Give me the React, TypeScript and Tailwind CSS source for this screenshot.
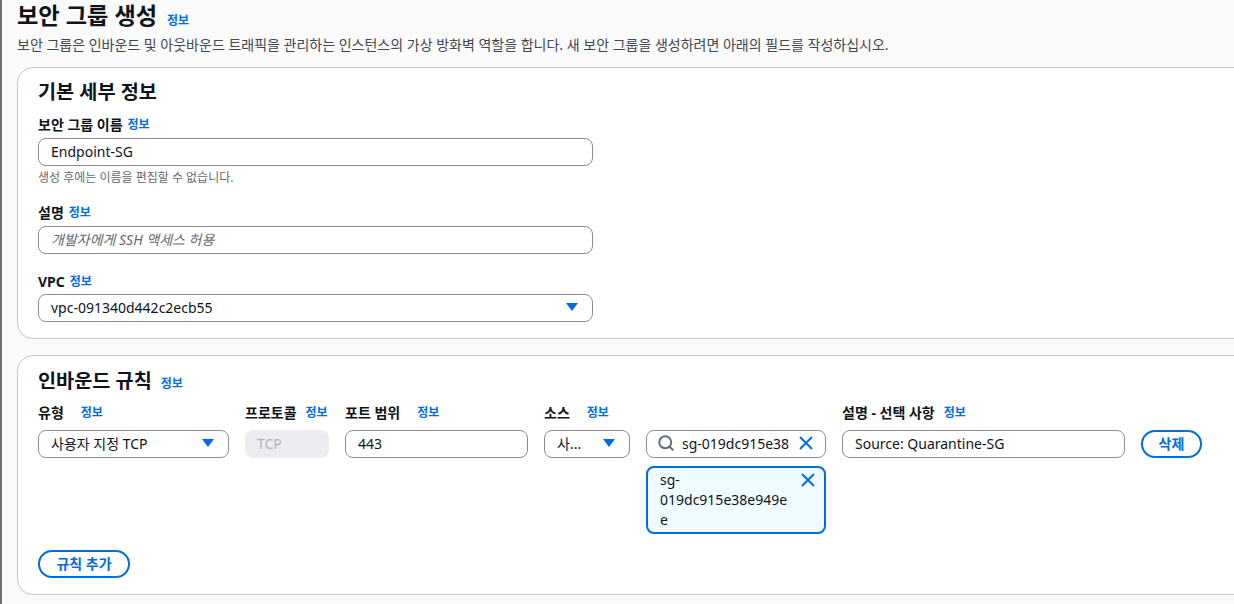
import { ReactNode } from 'react';
import { Search } from 'lucide-react';

const font = 'font-["Noto_Sans","Noto_Sans_CJK_KR",sans-serif]';

function Info({ className = '' }: { className?: string }) {
  return <span className={`text-[12px] font-bold text-[#006ce0] ${className}`}>정보</span>;
}

function Caret() {
  return (
    <svg width="12" height="8" viewBox="0 0 12 8" className="shrink-0">
      <path d="M0 0h12L6 8z" fill="#006ce0" />
    </svg>
  );
}

function Cross() {
  return (
    <svg width="14" height="14" viewBox="0 0 14 14" className="shrink-0">
      <path d="M1 1l12 12M13 1L1 13" stroke="#006ce0" strokeWidth="2" fill="none" />
    </svg>
  );
}

function Field({ label, infoClass = 'ml-[5px]', children }: { label: string; infoClass?: string; children?: ReactNode }) {
  return (
    <div>
      <div className="flex h-[20px] items-center text-[14px] font-bold text-[#0f141a]">
        {label}
        <Info className={`mt-[2px] ${infoClass}`} />
      </div>
      {children}
    </div>
  );
}

function Box({ children, className = '' }: { children: ReactNode; className?: string }) {
  return (
    <div className={`flex h-[28px] items-center rounded-lg border border-[#8c8c94] bg-white pb-[2px] text-[14px] text-[#0f141a] ${className}`}>
      {children}
    </div>
  );
}

function PillButton({ children, className = '' }: { children: ReactNode; className?: string }) {
  return (
    <div className={`flex h-[28px] items-center justify-center rounded-full border-2 border-[#006ce0] bg-white text-[14px] font-bold text-[#006ce0] ${className}`}>
      {children}
    </div>
  );
}

export default function App() {
  return (
    <div className={`h-[604px] w-[1234px] overflow-hidden border-l-2 border-[#6f6f6f] bg-[#fafafa] pl-[15px] ${font}`}>
      <div className="flex h-[32px] items-center">
        <h1 className="text-[23.2px] font-bold leading-none text-[#0f141a]">보안 그룹 생성</h1>
        <Info className="ml-[10px] mt-[9px]" />
      </div>
      <p className="mt-[2px] h-[21px] text-[14px] leading-[21px] text-[#424650]">
        보안 그룹은 인바운드 및 아웃바운드 트래픽을 관리하는 인스턴스의 가상 방화벽 역할을 합니다. 새 보안 그룹을 생성하려면 아래의 필드를 작성하십시오.
      </p>

      <section className="mt-[12px] h-[272px] w-[1300px] rounded-2xl border border-[#c6c6cd] bg-white pl-[20px] pt-[10px]">
        <h2 className="h-[28px] text-[19.7px] font-bold leading-[28px] text-[#0f141a]">기본 세부 정보</h2>
        <div className="w-[555px]">
          <div className="mt-[8px]">
            <Field label="보안 그룹 이름">
              <Box className="mt-[4px] px-3">Endpoint-SG</Box>
            </Field>
            <p className="mt-[3px] h-[18px] text-[12px] leading-[18px] text-[#656871]">생성 후에는 이름을 편집할 수 없습니다.</p>
          </div>
          <div className="mt-[15px]">
            <Field label="설명">
              <Box className="mt-[4px] px-3 italic text-[#656871]">개발자에게 SSH 액세스 허용</Box>
            </Field>
          </div>
          <div className="mt-[17px]">
            <Field label="VPC">
              <Box className="mt-[3px] justify-between pl-3 pr-[14px]">
                vpc-091340d442c2ecb55
                <Caret />
              </Box>
            </Field>
          </div>
        </div>
      </section>

      <section className="mt-[16px] h-[240px] w-[1300px] rounded-2xl border border-[#c6c6cd] bg-white pl-[20px] pt-[12px]">
        <div className="flex h-[26px] items-center">
          <h2 className="text-[19.7px] font-bold leading-none text-[#0f141a]">인바운드 규칙</h2>
          <Info className="ml-[9px] mt-[5px]" />
        </div>
        <div className="mt-[8px] grid grid-cols-[191px_84px_183px_86px_180px_283px_61px] gap-x-4">
          <Field label="유형" infoClass="ml-[17px]">
            <Box className="mt-[8px] justify-between pl-3 pr-[14px]">
              사용자 지정 TCP
              <Caret />
            </Box>
          </Field>
          <Field label="프로토콜" infoClass="ml-[9px]">
            <div className="mt-[8px] flex h-[28px] items-center rounded-lg bg-[#ebebf0] px-3 pb-[2px] text-[14px] text-[#b4b4bb]">TCP</div>
          </Field>
          <Field label="포트 범위" infoClass="ml-[17px]">
            <Box className="mt-[8px] px-3">443</Box>
          </Field>
          <Field label="소스" infoClass="ml-[17px]">
            <Box className="mt-[8px] justify-between pl-3 pr-[14px]">
              사...
              <Caret />
            </Box>
          </Field>
          <div className="pt-[20px]">
            <Box className="mt-[8px] pl-[10px] pr-3">
              <Search size={18} strokeWidth={2.5} className="shrink-0 text-[#5f6b7a]" />
              <span className="ml-[7px] min-w-0 flex-1 overflow-hidden whitespace-nowrap">sg-019dc915e38</span>
              <Cross />
            </Box>
            <div className="relative mt-[8px] h-[68px] rounded-lg border-2 border-[#006ce0] bg-[#f0fbff] pl-[12px] pt-[2px] text-[14px] leading-[20px] text-[#0f141a]">
              <div className="w-[132px] break-all">sg-<br />019dc915e38e949e<br />e</div>
              <div className="absolute right-[9px] top-[5px]"><Cross /></div>
            </div>
          </div>
          <Field label="설명 - 선택 사항" infoClass="ml-[9px]">
            <Box className="mt-[8px] px-3">Source: Quarantine-SG</Box>
          </Field>
          <div className="pt-[28px]">
            <PillButton className="pb-[1px]">삭제</PillButton>
          </div>
        </div>
        <PillButton className="mt-[16px] w-[92px] pb-[1px]">규칙 추가</PillButton>
      </section>
    </div>
  );
}
